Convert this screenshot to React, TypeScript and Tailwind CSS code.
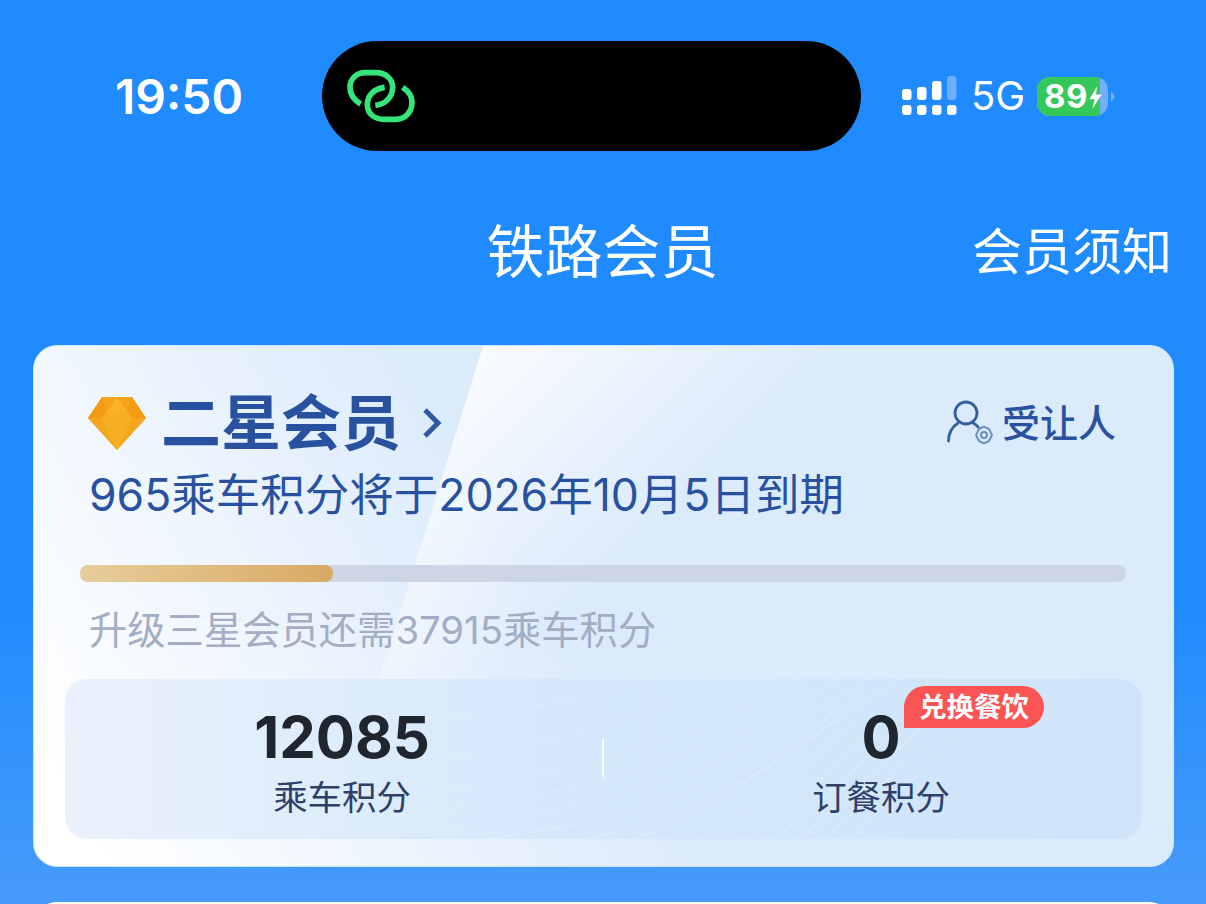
const F = '[font-family:Inter,"Noto_Sans_CJK_SC",sans-serif]';

function Signal() {
  const xs = [902, 917, 932, 947];
  const tops = [90, 88, 82, 77];
  return (
    <svg width="70" height="42" viewBox="900 76 70 42" className="block shrink-0">
      {xs.map((x) => (
        <rect key={x} x={x} y="106" width="9.500" height="10" rx="3" fill="#fff" />
      ))}
      {xs.map((x, i) => (
        <rect key={x + 'a'} x={x} y={tops[i]} width="9.500" height={101 - tops[i]} rx="3" fill={i === 3 ? '#6eaefc' : '#fff'} />
      ))}
    </svg>
  );
}

function Battery() {
  return (
    <div className="relative w-[78px] h-[39px] ml-[11px]">
      <div className="absolute left-0 top-0 w-[71px] h-[39px] rounded-[13px] overflow-hidden bg-[#74aef6]">
        <div className="w-[63px] h-full bg-[#34c759]" />
      </div>
      <div className="absolute left-[7px] top-0 h-[39px] leading-[39px] text-[33px] font-bold text-white tracking-[0.5px] [font-family:Inter,sans-serif]">89</div>
      <svg className="absolute left-[51px] top-[9px]" width="15" height="23" viewBox="0 0 16 26">
        <path d="M10 0 L1 15 L7 15 L4.500 26 L15 9.500 L8.500 9.500 Z" fill="#fff" />
      </svg>
      <svg className="absolute left-[74px] top-[14px]" width="4" height="11" viewBox="0 0 4 11">
        <path d="M0 0 L4 5.500 L0 11 Z" fill="#74aef6" />
      </svg>
    </div>
  );
}

function LinkLogo() {
  return (
    <svg width="70" height="56" viewBox="78 114 210 168" className="block" fill="none" stroke="#35e57a" strokeWidth="17" strokeLinecap="butt">
      <path d="M122 222 C98 208 90 192 90 172 C90 146 110 128 136 128 L168 128 C198 128 218 148 218 172 C218 200 198 222 166 226" />
      <path d="M248 172 C266 184 276 198 276 216 C276 246 256 268 228 268 L192 268 C162 268 142 250 142 224 C142 196 162 176 194 172" />
    </svg>
  );
}

function Diamond() {
  return (
    <svg width="58" height="53" viewBox="0 0 58 53" className="block shrink-0">
      <path d="M14 0 H44 L58 21 L29 53 L0 21 Z" fill="#f7ae22" />
      <path d="M14 0 H29 L20 13 Z" fill="#f6a21a" />
      <path d="M29 0 H44 L38 13 Z" fill="#f6a21a" />
      <path d="M14 0 L20 13 L14 21 L0 21 Z" fill="#f59c15" />
      <path d="M44 0 L58 21 L44 21 L38 13 Z" fill="#f59c15" />
      <path d="M29 0 L38 13 L20 13 Z" fill="#f9b325" />
      <path d="M0 21 H14 L29 53 Z" fill="#f4a71e" />
      <path d="M58 21 H44 L29 53 Z" fill="#f4a71e" />
      <path d="M14 21 L20 13 H38 L44 21 L29 53 Z" fill="#f8b023" />
    </svg>
  );
}

function PersonGear() {
  return (
    <svg width="48" height="46" viewBox="0 0 48 46" className="block shrink-0" fill="none">
      <circle cx="19" cy="13" r="11" stroke="#34609f" strokeWidth="2.800" />
      <path d="M11 23 C5 27 1.500 33 1.500 41" stroke="#34609f" strokeWidth="2.800" strokeLinecap="round" />
      <path d="M26 23 C28 24 30 25.500 31.500 27.500" stroke="#34609f" strokeWidth="2.800" strokeLinecap="round" />
      <path d="M32 29 L37 26.500 L42 29 L45 35 L42 41 L37 43.500 L32 41 L29 35 Z" stroke="#6f8fc0" strokeWidth="2" />
      <circle cx="37" cy="35" r="3" stroke="#6f8fc0" strokeWidth="2" />
    </svg>
  );
}

function PanelLines() {
  return (
    <svg className="absolute inset-0" width="1077" height="160" viewBox="0 0 1077 160" fill="none" stroke="#ffffff" strokeOpacity="0.15" strokeWidth="1.500">
      <path d="M290 40 C 420 40 520 25 600 -10" />
      <path d="M290 80 C 440 80 570 50 660 -10" />
      <path d="M300 120 C 480 110 640 60 750 -10" />
      <path d="M305 138 C 500 125 660 75 790 -10" />
      <path d="M330 152 C 520 140 680 90 815 -10" />
      <path d="M370 165 C 560 150 700 100 840 -5" />
      <path d="M470 170 C 600 150 730 90 800 10" />
      <path d="M540 170 C 640 140 720 80 770 30" />
      <path d="M610 170 C 680 140 740 90 790 40" />
      <path d="M670 170 C 710 140 770 90 810 50" />
      <path d="M700 170 L 835 50" />
      <path d="M725 170 L 855 50" />
      <path d="M750 170 L 875 50" />
      <path d="M775 170 L 895 55" />
    </svg>
  );
}

function Stat({ value, label, cls }: { value: string; label: string; cls: string }) {
  return (
    <div className={`flex flex-col items-center ${cls}`}>
      <div className="h-[66px] mt-[25px] leading-[66px] text-[58px] font-bold text-[#20262f] [font-family:Inter,sans-serif]">{value}</div>
      <div className={`h-[44px] mt-[6px] leading-[44px] text-[34.400px] text-[#2f3f68] ${F}`}>{label}</div>
    </div>
  );
}

export default function App() {
  return (
    <div className={`w-[1206px] h-[904px] overflow-hidden bg-[linear-gradient(180deg,#1f8bff_0%,#1f8bff_65%,#469bf9_100%)] ${F}`}>
      <div className="h-[110px] pt-[41px] box-content grid grid-cols-[322px_539px_1fr]">
        <div className="pl-[115px] h-[110px] leading-[112px] text-[48px] font-semibold text-white [font-family:Inter,sans-serif]">19:50</div>
        <div className="h-[110px] rounded-[55px] bg-black flex items-center pl-[24px]">
          <LinkLogo />
        </div>
        <div className="h-[110px] pl-[39px] flex items-center">
          <Signal />
          <div className="ml-[1px] w-[55px] text-[40px] leading-[44px] text-white [font-family:Inter,sans-serif]">5G</div>
          <Battery />
        </div>
      </div>

      <div className="mt-[66px] h-[70px] grid grid-cols-[1fr_auto_1fr] items-center pr-[34px] pl-[33px]">
        <div />
        <div className={`text-[58px] leading-[70px] text-white ${F}`}>铁路会员</div>
        <div className={`text-right text-[50px] leading-[70px] text-white ${F}`}>会员须知</div>
      </div>

      <div className="relative mt-[58px] mx-[33px] w-[1141px] h-[522px] rounded-[24px] overflow-hidden border border-[#cfe6ff] bg-[linear-gradient(60deg,#ffffff_5%,#dcebfc_46%)]">
        <div className="absolute inset-0 bg-[linear-gradient(135deg,rgba(255,255,255,0.9)_26%,rgba(255,255,255,0)_48%)] [clip-path:polygon(449px_0,100%_0,100%_100%,287px_100%)]" />

        <div className="relative pt-[49px] pl-[54px] pr-[57px] flex items-center">
          <Diamond />
          <div className={`ml-[15px] h-[56px] leading-[56px] text-[60px] font-bold text-[#28529f] ${F}`}>二星会员</div>
          <svg className="ml-[21px] block" width="20" height="32" viewBox="0 0 20 32" fill="none">
            <path d="M3 3 L16 16 L3 29" stroke="#2e5aa5" strokeWidth="5" />
          </svg>
          <div className="flex-1" />
          <PersonGear />
          <div className={`ml-[7px] text-[38px] leading-[46px] font-medium text-[#28529f] ${F}`}>受让人</div>
        </div>

        <div className={`relative pl-[55px] mt-[17px] h-[54px] leading-[54px] text-[44.500px] text-[#28529f] whitespace-nowrap ${F}`}>965乘车积分将于2026年10月5日到期</div>

        <div className="relative ml-[46px] mt-[43px] w-[1046px] h-[17px] rounded-[8px] bg-[#cdd6e4] overflow-hidden">
          <div className="w-[253px] h-full rounded-[8px] bg-[linear-gradient(90deg,#e7cd9b,#d9a964)]" />
        </div>

        <div className={`relative pl-[55px] mt-[24px] h-[48px] leading-[48px] text-[38.300px] text-[#a3adc3] whitespace-nowrap ${F}`}>升级三星会员还需37915乘车积分</div>

        <div className="relative ml-[31px] mt-[25px] w-[1077px] h-[160px] rounded-[22px] bg-[linear-gradient(90deg,#e9f2fc_0%,#d5e8fb_45%,#cfe4fa_100%)] flex">
          <PanelLines />
          <Stat value="12085" label="乘车积分" cls="relative w-[554px]" />
          <div className="relative w-[2px] h-[38px] mt-[60px] -ml-[17px] bg-white" />
          <Stat value="0" label="订餐积分" cls="relative flex-1 pl-[16px]" />
          <div className={`absolute left-[839px] top-[7px] w-[140px] h-[42px] rounded-tl-[21px] rounded-r-[21px] bg-[#fb5454] text-center text-[27.500px] leading-[42px] font-bold text-white ${F}`}>兑换餐饮</div>
        </div>
      </div>

      <div className="mt-[35px] mx-[33px] h-[40px] rounded-t-[24px] bg-white" />
    </div>
  );
}
